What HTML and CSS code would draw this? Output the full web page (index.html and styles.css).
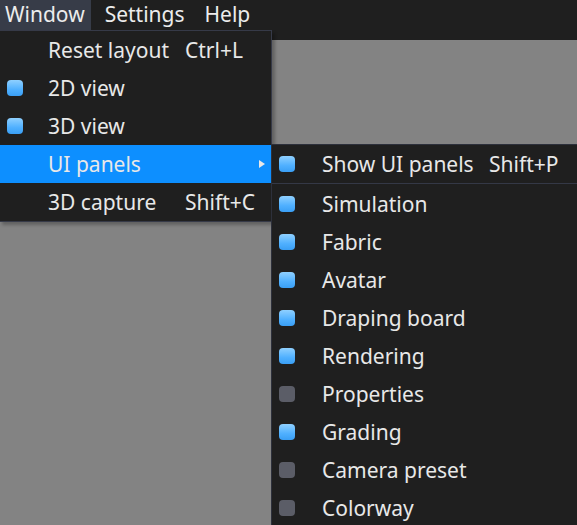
FILE: index.html
```html
<!DOCTYPE html>
<html>
<head>
<meta charset="utf-8">
<link rel="stylesheet" href="styles.css">
</head>
<body>
<div class="app">
  <div class="topbar">
    <div class="menubar">
      <div class="mb-item active">Window</div>
      <div class="mb-item">Settings</div>
      <div class="mb-item">Help</div>
    </div>
  </div>
  <div class="workspace"></div>

  <div class="menu main-menu">
    <div class="row"><span class="check"></span><span class="label">Reset layout</span><span class="sc">Ctrl+L</span></div>
    <div class="row"><span class="check"><i class="box on"></i></span><span class="label">2D view</span><span class="sc"></span></div>
    <div class="row"><span class="check"><i class="box on"></i></span><span class="label">3D view</span><span class="sc"></span></div>
    <div class="row hl"><span class="check"></span><span class="label">UI panels</span><span class="sc"></span><span class="arrow"></span></div>
    <div class="row"><span class="check"></span><span class="label">3D capture</span><span class="sc">Shift+C</span></div>
  </div>

  <div class="menu sub-menu">
    <div class="row"><span class="check"><i class="box on"></i></span><span class="label">Show UI panels</span><span class="sc">Shift+P</span></div>
    <div class="sep"></div>
    <div class="row"><span class="check"><i class="box on"></i></span><span class="label">Simulation</span></div>
    <div class="row"><span class="check"><i class="box on"></i></span><span class="label">Fabric</span></div>
    <div class="row"><span class="check"><i class="box on"></i></span><span class="label">Avatar</span></div>
    <div class="row"><span class="check"><i class="box on"></i></span><span class="label">Draping board</span></div>
    <div class="row"><span class="check"><i class="box on"></i></span><span class="label">Rendering</span></div>
    <div class="row"><span class="check"><i class="box off"></i></span><span class="label">Properties</span></div>
    <div class="row"><span class="check"><i class="box on"></i></span><span class="label">Grading</span></div>
    <div class="row"><span class="check"><i class="box off"></i></span><span class="label">Camera preset</span></div>
    <div class="row"><span class="check"><i class="box off"></i></span><span class="label">Colorway</span></div>
  </div>
</div>
</body>
</html>
```
FILE: styles.css
```css
* { box-sizing: border-box; }
html, body { margin: 0; padding: 0; }
body {
  width: 577px;
  height: 525px;
  overflow: hidden;
  background: #838383;
  font-family: "Noto Sans", "Open Sans", sans-serif;
  font-size: 21px;
  color: #e8e8e8;
}
.app {
  position: relative;
  width: 577px;
  height: 525px;
  display: flex;
  flex-direction: column;
}
.topbar {
  height: 40px;
  background: #1f1f1f;
  flex: none;
}
.menubar {
  display: flex;
  height: 30px;
}
.mb-item {
  height: 30px;
  line-height: 29px;
  padding: 0 5px;
  margin-right: 10px;
  color: #ececec;
}
.mb-item.active {
  background: #373c48;
  padding-right: 6px;
  margin-right: 9px;
}
.workspace {
  flex: 1;
  background: #838383;
}
.menu {
  position: absolute;
  background: #1f1f1f;
  border: 1px solid #363a48;
}
.main-menu {
  left: -1px;
  top: 30px;
  width: 273px;
  height: 192px;
  box-shadow: 3px 3px 3px rgba(0,0,0,0.25);
}
.sub-menu {
  left: 271px;
  top: 144px;
  width: 320px;
  height: 400px;
  border-color: #2d303b;
}
.row {
  position: relative;
  display: flex;
  align-items: center;
  height: 38px;
  line-height: 36px;
}
.row.hl { background: #0d8fff; }
.check {
  width: 48px;
  flex: none;
  display: flex;
  align-items: center;
  padding-left: 7px;
}
.sub-menu .check { padding-left: 7px; width: 50px; }
.box {
  display: block;
  width: 16px;
  height: 16px;
  border-radius: 4px;
}
.box.on {
  background: linear-gradient(#8fd0ff, #4fb0ff 60%, #3a9ff5);
}
.box.off {
  background: #5b5d67;
}
.label {
  width: 137px;
  flex: none;
  white-space: nowrap;
}
.sub-menu .label { width: 167px; }
.sc { white-space: nowrap; }
.arrow {
  position: absolute;
  left: 259px;
  top: 15px;
  width: 0;
  height: 0;
  border-top: 4px solid transparent;
  border-bottom: 4px solid transparent;
  border-left: 6px solid #e8e8e8;
}
.sep {
  height: 1px;
  background: #343846;
  margin: 0 0 1px 0;
}
```
